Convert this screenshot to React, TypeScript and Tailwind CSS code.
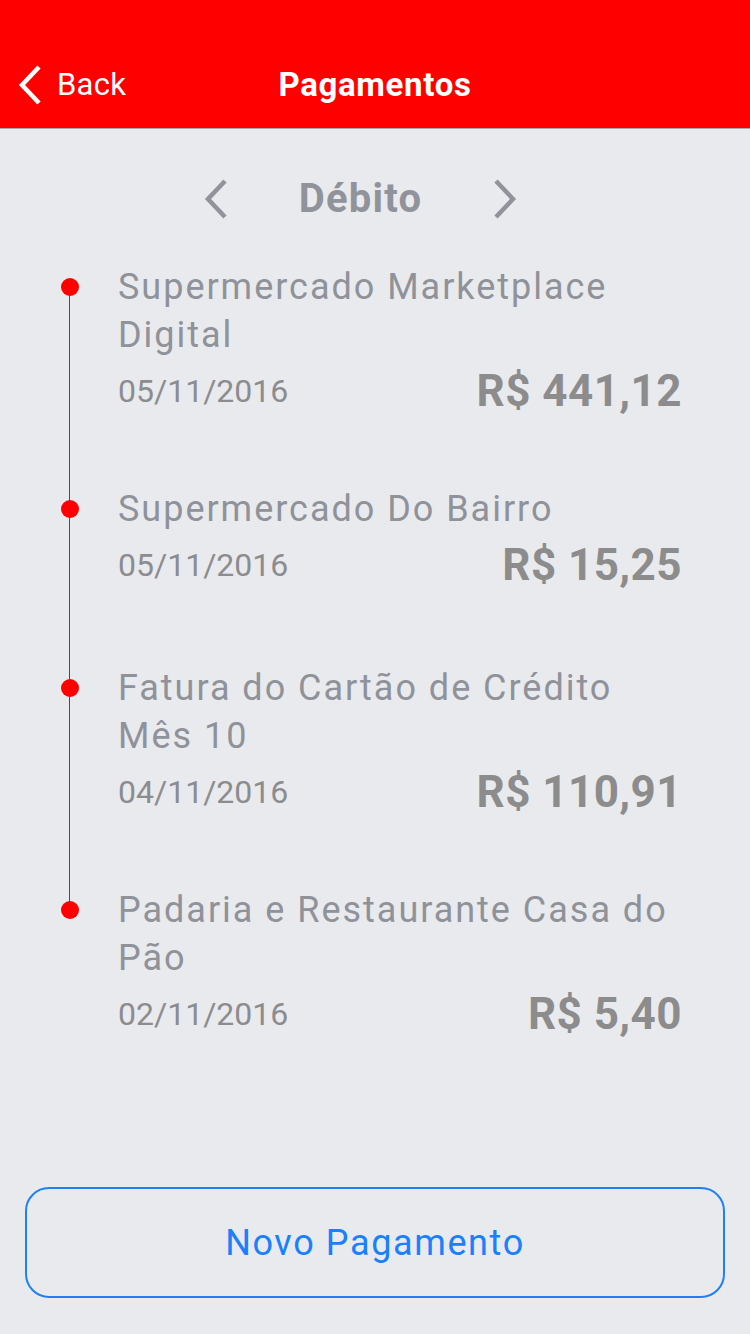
import React from 'react';

const payments = [
  { lines: ['Supermercado Marketplace', 'Digital'], date: '05/11/2016', amount: 'R$ 441,12', space: 'pb-[62px]' },
  { lines: ['Supermercado Do Bairro'], date: '05/11/2016', amount: 'R$ 15,25', space: 'pb-[67px]' },
  { lines: ['Fatura do Cartão de Crédito', 'Mês 10'], date: '04/11/2016', amount: 'R$ 110,91', space: 'pb-[62px]' },
  { lines: ['Padaria e Restaurante Casa do', 'Pão'], date: '02/11/2016', amount: 'R$ 5,40', space: 'pb-0' },
];

function Chevron({ dir, className }: { dir: 'left' | 'right'; className?: string }) {
  return (
    <svg viewBox="0 0 26 42" className={className} fill="none">
      <path
        d={dir === 'left' ? 'M22 3 L5 21 L22 39' : 'M4 3 L21 21 L4 39'}
        stroke="currentColor"
        strokeWidth="4.5"
        strokeLinejoin="miter"
      />
    </svg>
  );
}

export default function App() {
  return (
    <div className="w-[750px] min-h-[1334px] flex flex-col bg-[#e9eaee] font-['Roboto',sans-serif]">
      {/* Header */}
      <div className="h-[129px] bg-[#ff0000] border-b border-[#a9a9a9] grid grid-cols-[1fr_auto_1fr] items-center pt-[42px]">
        <div className="flex items-center gap-[14px] pl-[17px] text-white">
          <Chevron dir="left" className="w-[26px] h-[42px]" />
          <span className="text-[31px] tracking-[0.01em]">Back</span>
        </div>
        <h1 className="text-[33px] font-bold text-white tracking-[0.02em]">Pagamentos</h1>
        <div />
      </div>

      {/* Account switcher */}
      <div className="flex items-center justify-center gap-[70px] h-[134px] pt-[5px] pr-[29px] text-[#90939a]">
        <Chevron dir="left" className="w-[26px] h-[42px]" />
        <span className="text-[40px] font-bold tracking-[0.03em]">Débito</span>
        <Chevron dir="right" className="w-[26px] h-[42px]" />
      </div>

      {/* Timeline */}
      <div className="flex flex-col pl-[61px] pr-[68px]">
        {payments.map((p, i) => (
          <div key={i} className="flex">
            <div className="relative w-[18px] shrink-0 mr-[39px]">
              {i > 0 && <div className="absolute left-[8px] top-0 h-[24px] w-px bg-[#ff0000]" />}
              {i < payments.length - 1 && (
                <div className="absolute left-[8px] top-[24px] bottom-0 w-px bg-[#ff0000]" />
              )}
              <div className="relative mt-[15px] w-[18px] h-[18px] rounded-full bg-[#ff0000]" />
            </div>
            <div className={`flex-1 ${p.space}`}>
              {p.lines.map((line) => (
                <div key={line} className="text-[36px] leading-[48px] text-[#8f9299] tracking-[0.055em] whitespace-nowrap">
                  {line}
                </div>
              ))}
              <div className="flex items-center justify-between h-[64px]">
                <span className="text-[32px] text-[#8c8c8f]">{p.date}</span>
                <span className="text-[44px] font-bold text-[#8c8c8c] tracking-[0.01em]">{p.amount}</span>
              </div>
            </div>
          </div>
        ))}
      </div>

      {/* Action */}
      <div className="mt-auto px-[25px] pb-[36px]">
        <button className="w-full h-[111px] rounded-[24px] border-2 border-[#1f80f6] text-[36px] text-[#1a80fb] tracking-[0.045em]">
          Novo Pagamento
        </button>
      </div>
    </div>
  );
}
